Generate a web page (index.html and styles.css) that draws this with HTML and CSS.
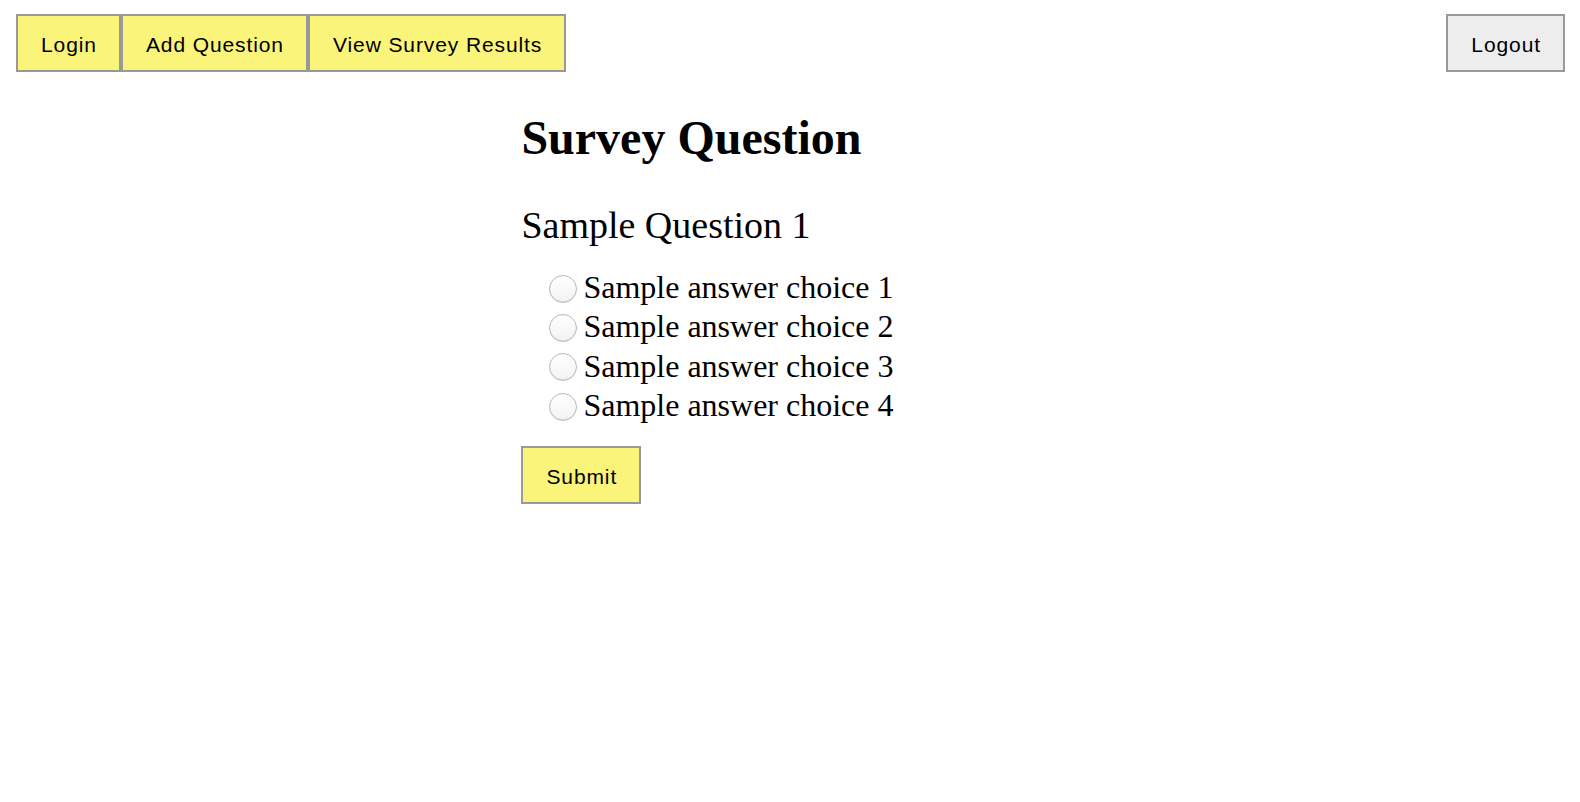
FILE: index.html
```html
<!DOCTYPE html>
<html lang="en">
<head>
<meta charset="utf-8">
<title>Survey Question</title>
<link rel="stylesheet" href="styles.css">
</head>
<body>
<nav class="topbar">
  <div class="nav-left">
    <button class="btn btn-yellow">Login</button>
    <button class="btn btn-yellow">Add Question</button>
    <button class="btn btn-yellow">View Survey Results</button>
  </div>
  <button class="btn btn-gray">Logout</button>
</nav>
<main class="content">
  <h1 class="title">Survey Question</h1>
  <h2 class="question">Sample Question 1</h2>
  <form class="answers">
    <label class="choice"><input type="radio" name="a" class="radio"><span>Sample answer choice 1</span></label>
    <label class="choice"><input type="radio" name="a" class="radio"><span>Sample answer choice 2</span></label>
    <label class="choice"><input type="radio" name="a" class="radio"><span>Sample answer choice 3</span></label>
    <label class="choice"><input type="radio" name="a" class="radio"><span>Sample answer choice 4</span></label>
    <div class="submit-row"><button type="button" class="btn btn-yellow">Submit</button></div>
  </form>
</main>
</body>
</html>
```

FILE: styles.css
```css
html, body {
  margin: 0;
  padding: 0;
  background: #ffffff;
}

body {
  font-family: "Liberation Serif", "Times New Roman", serif;
  color: #000;
}

.topbar {
  display: flex;
  justify-content: space-between;
  align-items: flex-start;
  padding: 14px 15px 0 16px;
}

.nav-left {
  display: flex;
}

.btn {
  font-family: "Liberation Sans", Arial, sans-serif;
  font-size: 21px;
  letter-spacing: 0.9px;
  line-height: 24px;
  padding: 17px 22px 13px 23px;
  border: 2px solid #999999;
  border-radius: 0;
  color: #000;
  margin: 0;
  cursor: pointer;
}

.btn-yellow {
  background: #faf47a;
}

.btn-gray {
  background: #ededed;
}

.content {
  margin-left: 33%;
}

.title {
  font-size: 48px;
  font-weight: bold;
  line-height: 55px;
  margin: 38px 0 0 0;
}

.question {
  font-size: 38px;
  font-weight: normal;
  line-height: 44px;
  margin: 38px 0 0 0;
}

.answers {
  margin: 21px 0 0 0;
}

.choice {
  display: flex;
  align-items: center;
  height: 39.3px;
  font-size: 32px;
  line-height: 37px;
}

.radio {
  appearance: none;
  -webkit-appearance: none;
  width: 28px;
  height: 28px;
  margin: 2px 6px 0 28px;
  border: 1px solid #b8b8b8;
  border-radius: 50%;
  background: linear-gradient(#ffffff, #f3f3f3);
  box-shadow: inset 0 -1px 1px rgba(0, 0, 0, 0.08);
  box-sizing: border-box;
  flex: none;
}

.submit-row {
  margin-top: 21px;
}
```
